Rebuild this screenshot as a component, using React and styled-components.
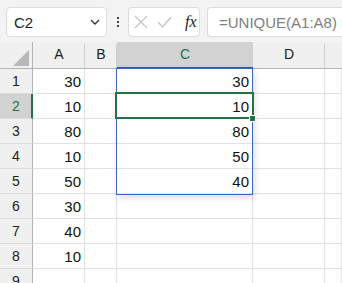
import React from "react";
import styled, { createGlobalStyle } from "styled-components";

const GlobalStyle = createGlobalStyle`
    html, body {
        margin: 0;
        padding: 0;
        background: #ffffff;
        font-family: "Liberation Sans", Arial, sans-serif;
    }
    body {
        width: 342px;
        height: 283px;
        overflow: hidden;
    }
`;

const Page = styled.div`
    width: 342px;
    height: 283px;
    overflow: hidden;
`;

const FormulaBar = styled.div`
    height: 42px;
    box-sizing: border-box;
    background: #f3f3f3;
    padding: 7px 0 5px 6px;
    display: flex;
    align-items: stretch;
    overflow: hidden;

    & > * {
        flex-shrink: 0;
    }
`;

const NameBox = styled.div`
    width: 101px;
    box-sizing: border-box;
    background: #fff;
    border: 1px solid #dcdcdc;
    border-radius: 4px;
    display: flex;
    align-items: center;
    justify-content: space-between;
    padding: 0 6px 0 7px;
    font-size: 15px;
    color: #1f1f1f;
`;

const Dots = styled.div`
    width: 21px;
    display: flex;
    flex-direction: column;
    align-items: center;
    justify-content: center;
    gap: 2px;

    span {
        width: 2px;
        height: 2px;
        background: #444;
    }
`;

const FnBox = styled.div`
    width: 72px;
    box-sizing: border-box;
    background: #fff;
    border: 1px solid #dcdcdc;
    border-radius: 4px;
    display: flex;
    align-items: center;
    padding: 0 0 0 5px;
    gap: 9px;
`;

const Fx = styled.span`
    font-family: "Liberation Serif", "Times New Roman", serif;
    font-style: italic;
    font-size: 16px;
    color: #222;
    margin-left: 4px;
`;

const FormulaInput = styled.div`
    width: 160px;
    margin-left: 7px;
    box-sizing: border-box;
    background: #fff;
    border: 1px solid #dcdcdc;
    border-right: none;
    border-radius: 4px 0 0 4px;
    display: flex;
    align-items: center;
    padding-left: 11px;
    font-size: 15px;
    color: #808080;
    white-space: nowrap;
`;

const Sheet = styled.div`
    position: relative;
    display: grid;
    grid-template-columns: 33px 52px 32px 136px 72px 1fr;
    grid-template-rows: 27px repeat(8, 25px) 25px;
`;

const Corner = styled.div`
    background: #f0f0f0;
    border-right: 1px solid #b4b4b4;
    border-bottom: 1px solid #b4b4b4;
    position: relative;

    &::after {
        content: "";
        position: absolute;
        right: 3px;
        bottom: 2px;
        width: 0;
        height: 0;
        border-left: 16px solid transparent;
        border-bottom: 16px solid #b8b8b8;
    }
`;

const ColHead = styled.div`
    position: relative;
    background: ${p => (p.$active ? "#d2d2d2" : "#f0f0f0")};
    border-bottom: ${p => (p.$active ? "2px solid #217346" : "1px solid #b4b4b4")};
    display: flex;
    align-items: center;
    justify-content: center;
    font-size: 14px;
    color: ${p => (p.$active ? "#217346" : "#222")};
    padding-bottom: ${p => (p.$active ? "1px" : "2px")};
    box-sizing: border-box;

    &::after {
        content: "";
        position: absolute;
        right: 0;
        top: 2px;
        bottom: 0;
        width: 1px;
        background: ${p => (p.$last ? "transparent" : "#cfcfcf")};
    }
`;

const RowHead = styled.div`
    background: ${p => (p.$active ? "#d2d2d2" : "#f0f0f0")};
    border-right: ${p => (p.$active ? "2px solid #217346" : "1px solid #b4b4b4")};
    border-bottom: 1px solid #dcdcdc;
    display: flex;
    align-items: center;
    justify-content: center;
    font-size: 14px;
    color: ${p => (p.$active ? "#217346" : "#222")};
    box-sizing: border-box;
    padding-left: ${p => (p.$active ? "1px" : "0")};
`;

const Cell = styled.div`
    border-right: 1px solid #e1e1e1;
    border-bottom: 1px solid #e1e1e1;
    display: flex;
    align-items: center;
    justify-content: flex-end;
    padding-right: 3px;
    font-size: 15px;
    color: #111;
    box-sizing: border-box;
`;

const Range = styled.div`
    position: absolute;
    left: 116px;
    top: 26px;
    width: 137px;
    height: 127px;
    box-sizing: border-box;
    border: 1px solid #3868c4;
    box-shadow: 2px 3px 7px rgba(0, 0, 0, 0.13);
    pointer-events: none;
`;

const ActiveCell = styled.div`
    position: absolute;
    left: 115px;
    top: 50px;
    width: 139px;
    height: 27px;
    box-sizing: border-box;
    border: 2px solid #217346;
    pointer-events: none;
`;

const FillHandle = styled.div`
    position: absolute;
    left: 249px;
    top: 73px;
    width: 5px;
    height: 5px;
    background: #217346;
    border: 1px solid #fff;
`;

const colA = [30, 10, 80, 10, 50, 30, 40, 10];
const colC = [30, 10, 80, 50, 40];

const App = () => (
    <Page>
        <GlobalStyle />
        <FormulaBar>
            <NameBox>
                <span>C2</span>
                <svg width="10" height="6" viewBox="0 0 10 6">
                    <path d="M1 1 L5 5 L9 1" fill="none" stroke="#333" strokeWidth="1.3" />
                </svg>
            </NameBox>
            <Dots>
                <span />
                <span />
                <span />
            </Dots>
            <FnBox>
                <svg width="14" height="14" viewBox="0 0 14 14">
                    <path d="M1 1 L13 13 M13 1 L1 13" stroke="#c4c4c4" strokeWidth="1.2" />
                </svg>
                <svg width="15" height="13" viewBox="0 0 15 13">
                    <path d="M1 6 L5.5 11 L14 1" fill="none" stroke="#c4c4c4" strokeWidth="1.2" />
                </svg>
                <Fx>fx</Fx>
            </FnBox>
            <FormulaInput>=UNIQUE(A1:A8)</FormulaInput>
        </FormulaBar>
        <Sheet>
            <Corner />
            <ColHead>A</ColHead>
            <ColHead>B</ColHead>
            <ColHead $active>C</ColHead>
            <ColHead>D</ColHead>
            <ColHead $last />
            {Array.from({ length: 9 }).map((_, i) => (
                <React.Fragment key={i}>
                    <RowHead $active={i === 1}>{i + 1}</RowHead>
                    <Cell>{colA[i]}</Cell>
                    <Cell />
                    <Cell>{colC[i]}</Cell>
                    <Cell />
                    <Cell />
                </React.Fragment>
            ))}
            <Range />
            <ActiveCell />
            <FillHandle />
        </Sheet>
    </Page>
);

export default App;
